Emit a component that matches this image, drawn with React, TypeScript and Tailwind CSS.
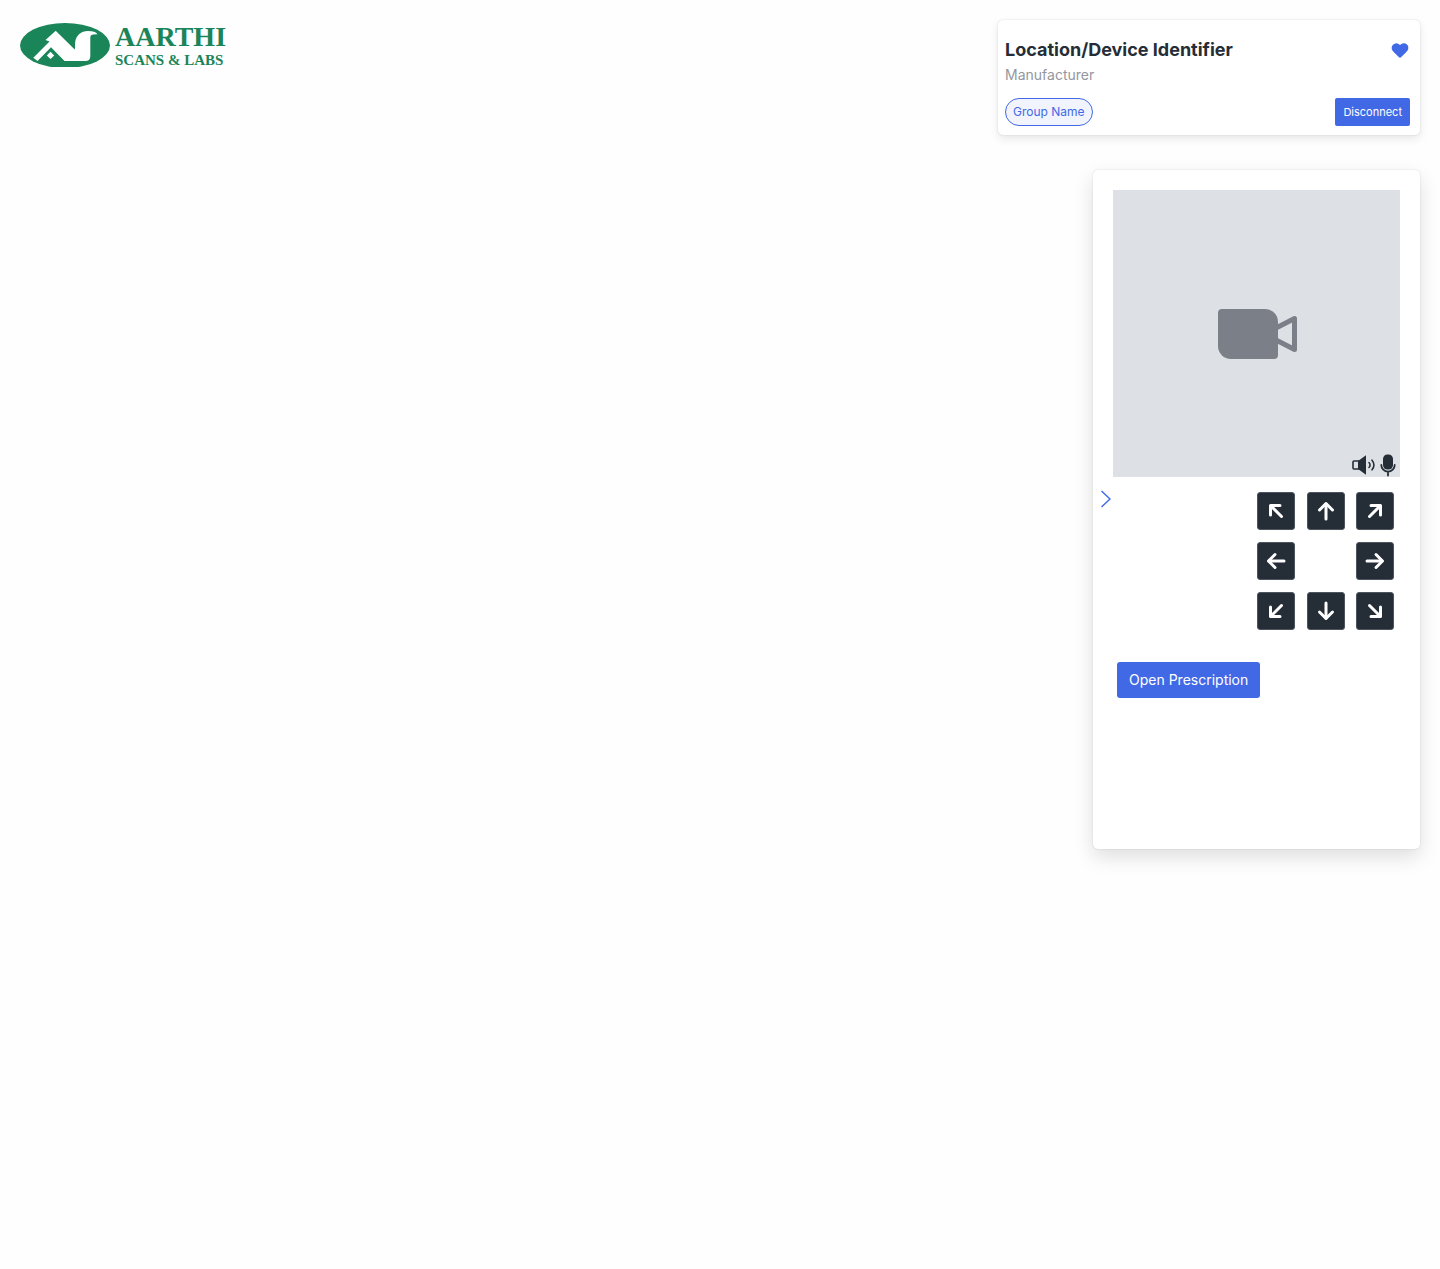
import { Heart } from "lucide-react";

const straight = ["M12 20V5", "M5.5 11 12 4.5l6.5 6.5"];
const diagonal = ["M7 7l10.5 10.5", "M6.5 16V6.5H16"];

const directions = [
  { label: "Move up left", paths: diagonal, turn: "rotate-0", cell: "col-start-1 row-start-1" },
  { label: "Move up", paths: straight, turn: "rotate-0", cell: "col-start-2 row-start-1" },
  { label: "Move up right", paths: diagonal, turn: "rotate-90", cell: "col-start-3 row-start-1" },
  { label: "Move left", paths: straight, turn: "-rotate-90", cell: "col-start-1 row-start-2" },
  { label: "Move right", paths: straight, turn: "rotate-90", cell: "col-start-3 row-start-2" },
  { label: "Move down left", paths: diagonal, turn: "-rotate-90", cell: "col-start-1 row-start-3" },
  { label: "Move down", paths: straight, turn: "rotate-180", cell: "col-start-2 row-start-3" },
  { label: "Move down right", paths: diagonal, turn: "rotate-180", cell: "col-start-3 row-start-3" },
];

function Logo() {
  return (
    <div className="flex items-start gap-[5px] pt-[3px] text-[#1a8558]">
      <svg className="h-11 w-[90px]" viewBox="0 0 90 44" aria-hidden="true">
        <ellipse cx="45" cy="22.5" rx="45" ry="22.5" fill="currentColor" />
        <path
          d="M35.700 7.700 54.700 26.500C55.500 25 54.800 22 55.200 19 56 12.500 61 8 68 8c5 0 8 1.200 9.500 3.200l-4.500.3c-2 .3-2.700 1.500-2.700 3.500V33.500c0 3-2 4.500-5 4.500H44.500L31 24.200 17.500 38l-4.200-3.300L29.500 18.500 25.500 17z"
          fill="#fff"
        />
        <path d="M30.500 28.700l3.700 3.700-3.700 3.700-3.700-3.700z" fill="#fff" />
      </svg>
      <div className="font-['Liberation_Serif',serif] font-bold">
        <div className="text-[28px] leading-[27px]">AARTHI</div>
        <div className="text-[15px] leading-5">SCANS &amp; LABS</div>
      </div>
    </div>
  );
}

function DeviceCard() {
  return (
    <section className="w-full max-w-[422px] rounded-[5px] bg-white pt-[18px] pr-[10px] pb-[9px] pl-[7px] shadow-[0_4px_10px_rgba(0,0,0,0.09),0_0_2px_rgba(0,0,0,0.14)]">
      <div className="flex items-center justify-between">
        <h1 className="text-[18px] leading-6 font-bold">Location/Device Identifier</h1>
        <button type="button" aria-label="Favourite" className="text-[#4169e6]">
          <Heart className="size-5" fill="currentColor" strokeWidth={0} />
        </button>
      </div>
      <p className="mt-[3px] text-sm leading-5 text-[#94979f]">Manufacturer</p>
      <div className="mt-[13px] flex items-center justify-between">
        <span className="flex h-7 items-center rounded-full border border-[#4169e6] bg-[#f1f3fd] px-[7px] text-xs text-[#4169e6]">
          Group Name
        </span>
        <button type="button" className="h-7 rounded-[2px] bg-[#4169e6] px-2 text-[11px] text-white">
          Disconnect
        </button>
      </div>
    </section>
  );
}

function VideoView() {
  return (
    <div className="relative mx-5 flex aspect-square items-center justify-center bg-[#dde1e6]">
      <svg className="h-[50px] w-20" viewBox="0 0 80 50" fill="#7b7f87" aria-hidden="true">
        <path d="M5 0H48a13 13 0 0 1 13 13V46a4 4 0 0 1-4 4H14A13 13 0 0 1 1 37V4a4 4 0 0 1 4-4z" />
        <path d="M60 18.500 77.500 9.500V40.500L60 31.500" fill="none" stroke="#7b7f87" strokeWidth="5" strokeLinejoin="round" />
      </svg>
      <div className="absolute right-1 bottom-0 flex items-center gap-1">
        <button type="button" aria-label="Volume">
          <svg className="h-6 w-6" viewBox="0 0 24 24" fill="none" stroke="#252d37" strokeWidth="1.600">
            <path d="M7 8H2a1 1 0 0 0-1 1v6a1 1 0 0 0 1 1H7" />
            <path d="M6 8 14 2.200V21.800L6 16z" fill="#252d37" stroke="none" />
            <path d="M17 9.500a3.500 3.500 0 0 1 0 5M20 7.200a7 7 0 0 1 0 9.600" strokeLinecap="round" />
          </svg>
        </button>
        <button type="button" aria-label="Microphone">
          <svg className="h-6 w-4" viewBox="0 0 16 24" fill="none" stroke="#252d37" strokeWidth="1.800">
            <rect x="3" y="1.500" width="10" height="15" rx="4.500" fill="#252d37" stroke="none" />
            <path d="M1.300 12a6.700 6.700 0 0 0 13.400 0M8 19v3.500" strokeLinecap="round" />
          </svg>
        </button>
      </div>
    </div>
  );
}

function ControlPanel() {
  return (
    <section className="flex min-h-[679px] w-full max-w-[327px] flex-col rounded-[5px] bg-white py-5 shadow-[0_8px_20px_rgba(0,0,0,0.13),0_0_2px_rgba(0,0,0,0.14)]">
      <VideoView />
      <div className="mt-[13px] flex items-start justify-between pr-[26px] pl-2">
        <button type="button" aria-label="Collapse panel">
          <svg className="h-[18px] w-[10px]" viewBox="0 0 10 18" fill="none" stroke="#4169e6" strokeWidth="1.500">
            <path d="M.5 1 9 9 .5 17" />
          </svg>
        </button>
        <div className="mt-[2px] grid w-[137px] grid-cols-[38px_38px_38px] justify-between gap-y-3">
          {directions.map((d) => (
            <button
              key={d.label}
              type="button"
              aria-label={d.label}
              className={`${d.cell} flex size-[38px] items-center justify-center rounded-[3px] border border-[#4d545e] bg-[#252d37]`}
            >
              <svg
                className={`size-6 shrink-0 ${d.turn}`}
                viewBox="0 0 24 24"
                fill="none"
                stroke="#fff"
                strokeWidth="3"
                strokeLinecap="round"
                strokeLinejoin="round"
              >
                {d.paths.map((p) => (
                  <path key={p} d={p} />
                ))}
              </svg>
            </button>
          ))}
        </div>
      </div>
      <button
        type="button"
        className="mt-8 ml-6 h-9 self-start rounded-[3px] bg-[#4169e6] px-3 text-sm text-white"
      >
        Open Prescription
      </button>
    </section>
  );
}

export default function App() {
  return (
    <main className="flex min-h-screen items-start justify-between bg-[#fefefe] p-5 font-['Inter',sans-serif] text-[#252d37]">
      <Logo />
      <div className="flex flex-1 flex-col items-end gap-[35px]">
        <DeviceCard />
        <ControlPanel />
      </div>
    </main>
  );
}
